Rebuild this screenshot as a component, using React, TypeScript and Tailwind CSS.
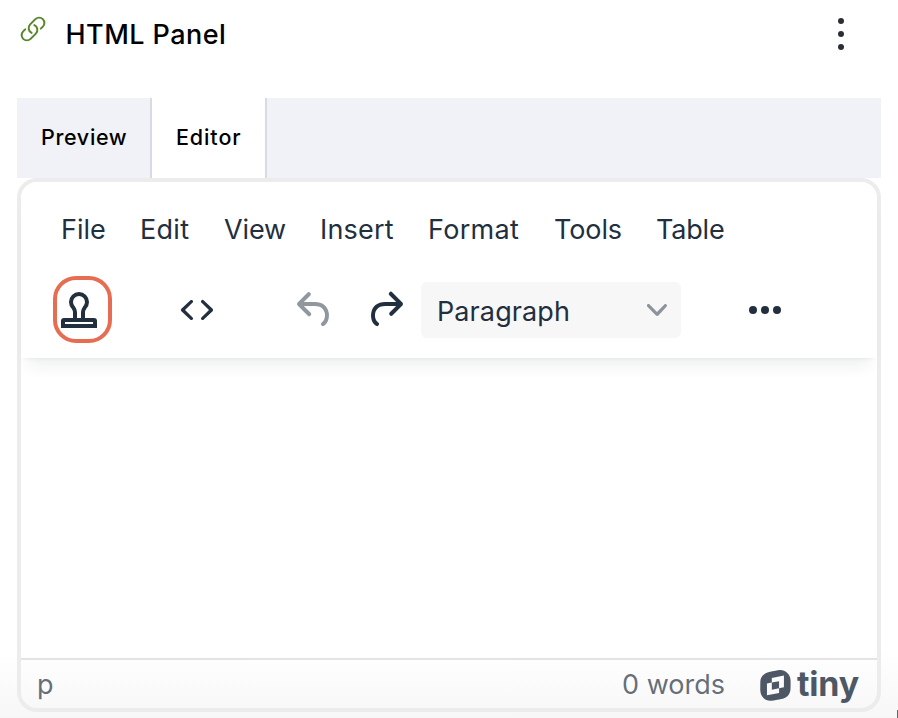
import React from "react";

const menus: [string, string][] = [
  ["File", "w-[79px]"],
  ["Edit", "w-[84px] tracking-[0.3px]"],
  ["View", "w-[96px] tracking-[-0.1px]"],
  ["Insert", "w-[108px] tracking-[0.2px]"],
  ["Format", "w-[126px] tracking-[0.3px]"],
  ["Tools", "w-[102px] tracking-[-0.1px]"],
  ["Table", "w-[80px] tracking-[-0.2px]"],
];

function ToolIcon({ d, className }: { d: string; className: string }) {
  return (
    <svg viewBox="0 0 24 24" fill="currentColor" className={`size-12 shrink-0 ${className}`}>
      <path d={d} />
    </svg>
  );
}

export default function App() {
  return (
    <div className="relative flex h-[718px] w-[898px] flex-col overflow-hidden bg-white bg-[linear-gradient(to_bottom,transparent_650px,#f7f7f7_718px)] px-[17px] font-['Inter',sans-serif]">
      <header className="flex h-[98px] shrink-0 items-start">
        <svg viewBox="0 0 24 24" fill="none" stroke="#568729" strokeWidth="1.7" strokeLinecap="round" strokeLinejoin="round" className="mt-[14.5px] ml-[2px] size-7">
          <path d="M13.19 8.688a4.5 4.5 0 0 1 1.242 7.244l-4.5 4.5a4.5 4.5 0 0 1-6.364-6.364l1.757-1.757m13.35-.622 1.757-1.757a4.5 4.5 0 0 0-6.364-6.364l-4.5 4.5a4.5 4.5 0 0 0 1.242 7.244" />
        </svg>
        <h1 className="mt-[15px] ml-[18.5px] text-[27px] leading-10 font-[450] tracking-[0.45px] text-black">HTML Panel</h1>
        <div className="mt-[18px] mr-[37px] ml-auto flex flex-col gap-[7px]">
          <i className="size-[6px] rounded-full bg-[#2b2e34]" />
          <i className="size-[6px] rounded-full bg-[#2b2e34]" />
          <i className="size-[6px] rounded-full bg-[#2b2e34]" />
        </div>
      </header>

      <nav className="flex h-20 shrink-0 bg-[#f1f2f7] text-[21.5px] font-[450] text-black">
        <div className="flex w-[135px] items-center border-r-2 border-[#d7dce4] pb-[2px] pl-6 tracking-[0.65px]">Preview</div>
        <div className="flex w-[115px] items-center border-r-2 border-[#d7dce4] bg-white pb-[2px] pl-6 tracking-[0.9px]">Editor</div>
      </nav>

      <main className="flex h-[534px] shrink-0 flex-col rounded-[20px] border-4 border-[#ececec]">
        <div className="flex h-[176px] shrink-0 flex-col rounded-t-2xl bg-white shadow-[0_4px_4px_-4px_rgba(34,47,62,0.1),0_16px_16px_-8px_rgba(34,47,62,0.07)]">
          <div className="flex pt-[28px] pl-10 text-[27px] leading-10 text-[#222f3e]">
            {menus.map(([name, w]) => (
              <span key={name} className={`${w} whitespace-nowrap`}>{name}</span>
            ))}
          </div>
          <div className="mt-[26px] flex h-[67px] items-center pl-8">
            <div className="h-[67px] w-[59px] rounded-[23px] border-4 border-[#e66c52]">
              <svg viewBox="0 0 51 59" fill="none" stroke="#222f3e" strokeWidth="4" className="h-[59px] w-[51px]">
                <path d="M18 38V32Q18 30 16.3 27.6A8 8 0 1 1 27.7 27.6Q26 30 26 32V38" />
                <path d="M6 46V41Q6 40 7 40H37Q38 40 38 41V46Z" />
              </svg>
            </div>
            <ToolIcon className="ml-[61px] text-[#222f3e]" d="M9.8 15.7c.3.3.3.8 0 1-.3.4-.9.4-1.2 0l-4.4-4.1a.8.8 0 0 1 0-1.2l4.4-4.2c.3-.3.9-.3 1.2 0 .3.3.3.8 0 1.1L6 12l3.8 3.7ZM14.2 15.7c-.3.3-.3.8 0 1 .4.4.9.4 1.2 0l4.4-4.1c.3-.3.3-.8 0-1.2l-4.4-4.2a.8.8 0 0 0-1.2 0c-.3.3-.3.8 0 1.1L18 12l-3.8 3.7Z" />
            <ToolIcon className="ml-[70px] text-[#222f3e]/50" d="M6.4 8H12c3.7 0 6.2 2 6.8 5.1.6 2.7-.4 5.6-2.3 6.8a1 1 0 0 1-1-1.8c1.1-.6 1.8-2.7 1.4-4.6-.5-2.1-2.1-3.5-4.9-3.5H6.4l3.3 3.3a1 1 0 1 1-1.4 1.4l-5-5a1 1 0 0 1 0-1.4l5-5a1 1 0 0 1 1.4 1.4L6.4 8Z" />
            <ToolIcon className="ml-[22px] text-[#222f3e]" d="M17.6 10H12c-2.8 0-4.4 1.4-4.9 3.5-.4 2 .3 4 1.4 4.6a1 1 0 1 1-1 1.8c-2-1.2-2.9-4.1-2.3-6.8.6-3 3-5.1 6.8-5.1h5.6l-3.3-3.3a1 1 0 1 1 1.4-1.4l5 5a1 1 0 0 1 0 1.4l-5 5a1 1 0 0 1-1.4-1.4l3.3-3.3Z" />
            <div className="ml-3 flex h-14 w-[260px] items-center justify-between rounded-md bg-[#f7f7f7] pr-[14px] pl-4 text-[27px] text-[#222f3e]">
              <span className="pt-[5px] leading-10 tracking-[0.1px]">Paragraph</span>
              <svg viewBox="0 0 10 10" fill="#222f3e" fillOpacity="0.5" className="size-5">
                <path d="M8.7 2.2c.3-.3.8-.3 1 0 .4.4.4.9 0 1.2L5.7 7.8c-.3.3-.9.3-1.2 0L.2 3.4a.8.8 0 0 1 0-1.2c.3-.3.8-.3 1.1 0L5 6l3.7-3.8Z" />
              </svg>
            </div>
            <ToolIcon className="ml-[60px] text-[#222f3e]" d="M6 10a2 2 0 1 0 0 4 2 2 0 0 0 0-4Zm12 0a2 2 0 1 0 0 4 2 2 0 0 0 0-4Zm-6 0a2 2 0 1 0 0 4 2 2 0 0 0 0-4Z" />
          </div>
        </div>
        <div className="flex-1" />
        <footer className="flex h-[50px] items-center border-t-2 border-[#e3e3e3] pt-[2px] pr-[19px] pl-4 text-[27px] text-[#222f3e]/70">
          <span>p</span>
          <span className="ml-auto">0 words</span>
          <div className="ml-[35px] flex items-center text-[#4e5865]">
            <svg viewBox="0 0 15.4 15.7" fill="currentColor" fillRule="evenodd" className="h-[31px] w-[31px]">
              <path d="M10.143 0c2.608.015 5.186 2.178 5.186 5.331 0 0 .077 3.812-.084 4.87-.361 2.41-2.164 4.074-4.65 4.496-1.453.284-2.523.49-3.212.623-.373.071-.634.122-.785.152-.184.038-.997.145-1.35.145-2.732 0-5.21-2.04-5.248-5.33 0 0 0-3.514.03-4.442.093-2.4 1.758-4.342 4.926-4.963 0 0 3.875-.752 4.036-.782.368-.07.775-.1 1.15-.1Zm1.826 2.8L5.83 3.989v2.393l-2.455.475v5.968l6.137-1.189V9.243l2.456-.476V2.8ZM5.83 6.382l3.682-.713v3.574l-3.682.713V6.382Z" />
            </svg>
            <b className="mt-[-3px] ml-[6px] w-[61px] text-[34px] leading-10 font-bold tracking-[-0.2px]">tiny</b>
          </div>
        </footer>
      </main>
      <div className="absolute right-0 bottom-0 h-2 w-px bg-[#666]" />
    </div>
  );
}
